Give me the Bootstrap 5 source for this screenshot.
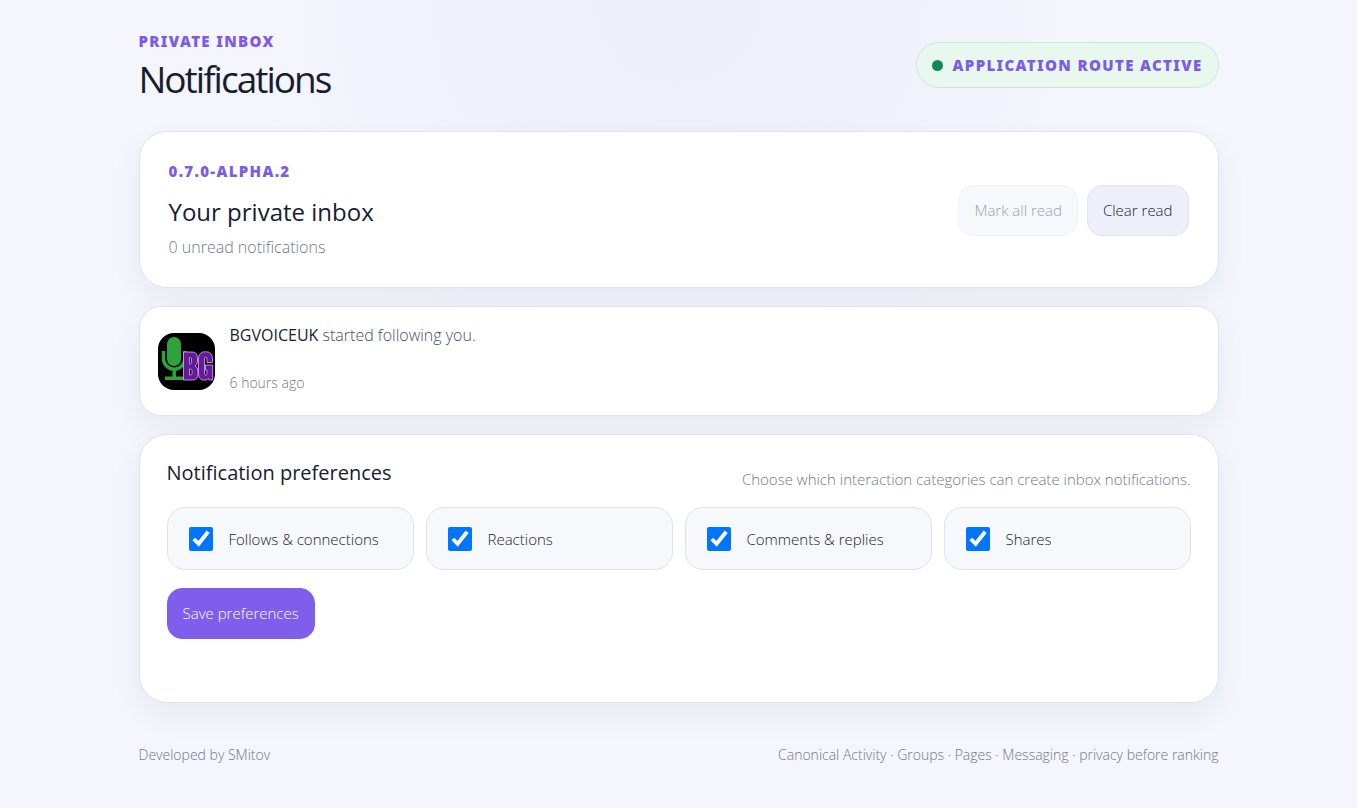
<!DOCTYPE html>
<html lang="en">
<head>
<meta charset="utf-8">
<meta name="viewport" content="width=device-width, initial-scale=1">
<title>Notifications</title>
<link rel="stylesheet" href="https://cdn.jsdelivr.net/npm/bootstrap@5.3.0/dist/css/bootstrap.min.css">
<style>
  body {
    font-family: "Open Sans", "Noto Sans", sans-serif;
    font-weight: 300;
    font-size: 16px;
    line-height: 24px;
    color: #171d30;
    background: radial-gradient(circle at 50% 0, #eeedfa 0, #f4f5fd 420px) #f4f5fd;
    min-height: 100vh;
  }
  .shell { max-width: 1080px; }
  .page-head { padding-top: 7px; margin-bottom: 32px; }
  .eyebrow { font-family: "Noto Sans", sans-serif; font-weight: 900; font-size: 15px; letter-spacing: .09em; line-height: 20px; color: #7c5ce6; text-transform: uppercase; }
  .page-title { font-size: 37px; line-height: 40px; font-weight: 400; letter-spacing: -2px; }
  .status-pill { height: 46px; background: #e8f8ef; border: 1px solid #c6ebd6; gap: 10px; padding: 0 15px; }
  .status-dot { width: 11px; height: 11px; background: #15855a; }
  .stack { gap: 18px; }
  .panel { background: #fff; border: 1px solid #dfe3ee; border-radius: 28px; box-shadow: 0 12px 32px rgba(30, 65, 75, .06); }
  .panel-inbox { padding: 29px 29px 28px; }
  .panel-item { border-radius: 22px; padding: 16px 18px; gap: 15px; }
  .panel-prefs { padding: 24px 27px 63px; }
  .soft { color: #727988; }
  .section-title { font-size: 24px; line-height: 32px; font-weight: 400; margin: 15px 0 7px; }
  .prefs-title { font-size: 20px; line-height: 28px; font-weight: 400; margin-bottom: 4px; }
  .prefs-head { margin-bottom: 16px; }
  .prefs-hint, .pref { font-size: 15px; }
  .message { margin-bottom: 24px; color: #4a5060; }
  .message strong { font-weight: 400; color: #171d30; }
  .stamp { font-size: 14px; margin-bottom: 4px; }
  .actions { gap: 9px; }
  .action { --bs-btn-font-size: 15px; --bs-btn-font-weight: 300; --bs-btn-border-radius: 15px; --bs-btn-padding-x: 15px; height: 51px; }
  .action-soft { --bs-btn-color: #171d30; --bs-btn-bg: #edf0fa; --bs-btn-border-color: #e0e4ef; --bs-btn-disabled-color: #171d30; --bs-btn-disabled-bg: #edf0fa; --bs-btn-disabled-border-color: #e0e4ef; --bs-btn-disabled-opacity: .45; }
  .action-main { --bs-btn-color: #fff; --bs-btn-bg: #7f5ded; --bs-btn-border-color: #7f5ded; --bs-btn-hover-bg: #6e4ddb; --bs-btn-hover-color: #fff; }
  .choices { --bs-gutter-x: 12px; margin-bottom: 18px; row-gap: 12px; }
  .pref { height: 63px; padding: 0 21px; gap: 16px; background: #f6f8fc; border: 1px solid #dfe3ee; border-radius: 18px; }
  .pref input { width: 24px; height: 24px; margin: 0; accent-color: #0075ff; }
  .avatar { width: 57px; height: 57px; border-radius: 16px; }
  .page-foot { font-size: 14px; margin: 40px 0 24px; }
</style>
</head>
<body>
<div class="container shell px-0 pt-4">
  <header class="page-head d-flex justify-content-between align-items-center">
    <div>
      <div class="eyebrow">Private inbox</div>
      <h1 class="page-title mt-2 mb-0">Notifications</h1>
    </div>
    <div class="status-pill rounded-pill d-flex align-items-center">
      <span class="status-dot rounded-circle"></span>
      <span class="eyebrow">Application route active</span>
    </div>
  </header>

  <main class="stack d-grid">
    <section class="panel panel-inbox d-flex justify-content-between align-items-center">
      <div>
        <div class="eyebrow">0.7.0-alpha.2</div>
        <h2 class="section-title">Your private inbox</h2>
        <p class="soft mb-0">0 unread notifications</p>
      </div>
      <div class="actions d-flex">
        <button type="button" class="btn action action-soft" disabled>Mark all read</button>
        <button type="button" class="btn action action-soft">Clear read</button>
      </div>
    </section>

    <article class="panel panel-item d-flex align-items-center">
      <svg class="avatar flex-shrink-0" viewBox="0 0 57 57" role="img" aria-label="BGVOICEUK">
        <rect width="57" height="57" fill="#000"/>
        <rect x="9" y="4" width="14" height="29" rx="7" fill="#2fa33b"/>
        <path d="M5.500 18v7.500a10.700 10.700 0 0 0 21.400 0V18M16.200 36v9M7 45.200h19" fill="none" stroke="#2fa33b" stroke-width="3.500"/>
        <g fill="#67189f" stroke="#d5b4e8" stroke-width=".8" fill-rule="evenodd">
          <path d="M25.500 19h8.500q5.500 0 5.500 6v3q0 4-2.500 5 3 1 3 5v3q0 6-5.500 6h-9zM31.500 24.500v6.500h.8q1.200 0 1.200-1.500v-3.500q0-1.500-1.200-1.500zM31.500 36v6h.8q1.700 0 1.700-1.500v-3q0-1.500-1.700-1.500z"/>
          <path d="M40.500 26q0-7.300 7-7.300t7 7.300v3.500h-5.500V26q0-1.800-1.200-1.800T46.500 26v14.500q0 1.800 1.300 1.800T49 40.500V37h-1.500v-5h7.200v15h-3.700l-.5-1.500q-1.500 1.700-4 1.700-6 0-6-7.200z"/>
        </g>
      </svg>
      <div>
        <p class="message"><strong>BGVOICEUK</strong> started following you.</p>
        <time class="soft stamp d-block">6 hours ago</time>
      </div>
    </article>

    <form class="panel panel-prefs">
      <div class="prefs-head d-flex justify-content-between align-items-end">
        <h2 class="prefs-title">Notification preferences</h2>
        <p class="soft prefs-hint mb-0">Choose which interaction categories can create inbox notifications.</p>
      </div>
      <div class="choices row row-cols-1 row-cols-sm-2 row-cols-lg-4">
        <div class="col"><label class="pref d-flex align-items-center"><input type="checkbox" checked> Follows &amp; connections</label></div>
        <div class="col"><label class="pref d-flex align-items-center"><input type="checkbox" checked> Reactions</label></div>
        <div class="col"><label class="pref d-flex align-items-center"><input type="checkbox" checked> Comments &amp; replies</label></div>
        <div class="col"><label class="pref d-flex align-items-center"><input type="checkbox" checked> Shares</label></div>
      </div>
      <button type="submit" class="btn action action-main">Save preferences</button>
    </form>
  </main>

  <footer class="page-foot soft d-flex justify-content-between">
    <span>Developed by SMitov</span>
    <span>Canonical Activity · Groups · Pages · Messaging · privacy before ranking</span>
  </footer>
</div>
<script src="https://cdn.jsdelivr.net/npm/bootstrap@5.3.0/dist/js/bootstrap.bundle.min.js"></script>
</body>
</html>
